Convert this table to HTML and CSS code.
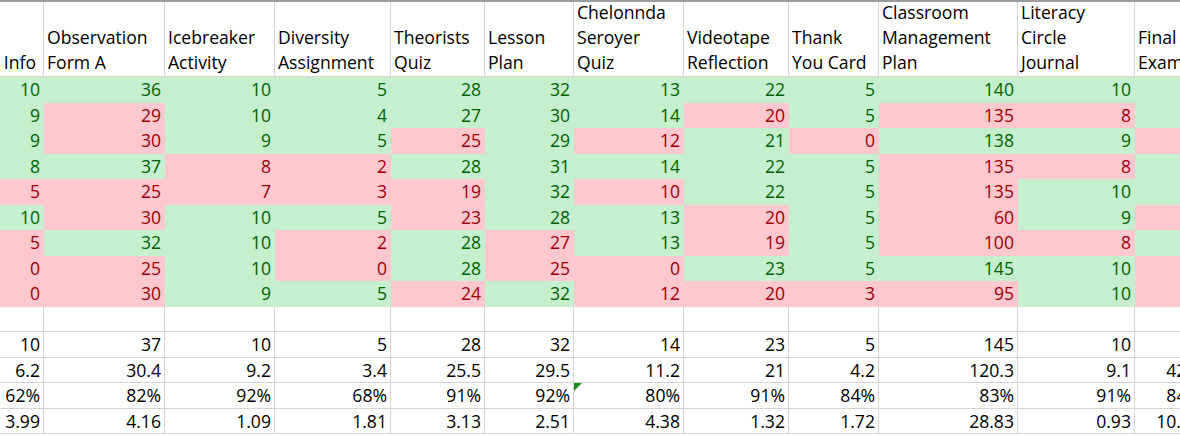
FILE: index.html
```html
<!DOCTYPE html>
<html>
<head>
<meta charset="utf-8">
<link rel="stylesheet" href="styles.css">
</head>
<body>
<div class="sheet">
  <div class="c h">Contact Info</div>
  <div class="c h">Observation<br>Form A</div>
  <div class="c h">Icebreaker<br>Activity</div>
  <div class="c h">Diversity<br>Assignment</div>
  <div class="c h">Theorists<br>Quiz</div>
  <div class="c h">Lesson<br>Plan</div>
  <div class="c h">Chelonnda<br>Seroyer<br>Quiz</div>
  <div class="c h">Videotape<br>Reflection</div>
  <div class="c h">Thank<br>You Card</div>
  <div class="c h">Classroom<br>Management<br>Plan</div>
  <div class="c h">Literacy<br>Circle<br>Journal</div>
  <div class="c h">Final<br>Exam</div>

  <div class="c g">10</div><div class="c g">36</div><div class="c g">10</div><div class="c g">5</div><div class="c g">28</div><div class="c g">32</div><div class="c g">13</div><div class="c g">22</div><div class="c g">5</div><div class="c g">140</div><div class="c g">10</div><div class="c g">48</div>
  <div class="c g">9</div><div class="c r">29</div><div class="c g">10</div><div class="c g">4</div><div class="c g">27</div><div class="c g">30</div><div class="c g">14</div><div class="c r">20</div><div class="c g">5</div><div class="c r">135</div><div class="c r">8</div><div class="c g">47</div>
  <div class="c g">9</div><div class="c r">30</div><div class="c g">9</div><div class="c g">5</div><div class="c r">25</div><div class="c g">29</div><div class="c r">12</div><div class="c g">21</div><div class="c r">0</div><div class="c g">138</div><div class="c g">9</div><div class="c r">38</div>
  <div class="c g">8</div><div class="c g">37</div><div class="c r">8</div><div class="c r">2</div><div class="c g">28</div><div class="c g">31</div><div class="c g">14</div><div class="c g">22</div><div class="c g">5</div><div class="c r">135</div><div class="c r">8</div><div class="c g">48</div>
  <div class="c r">5</div><div class="c r">25</div><div class="c r">7</div><div class="c r">3</div><div class="c r">19</div><div class="c g">32</div><div class="c r">10</div><div class="c g">22</div><div class="c g">5</div><div class="c r">135</div><div class="c g">10</div><div class="c g">46</div>
  <div class="c g">10</div><div class="c r">30</div><div class="c g">10</div><div class="c g">5</div><div class="c r">23</div><div class="c g">28</div><div class="c g">13</div><div class="c r">20</div><div class="c g">5</div><div class="c r">60</div><div class="c g">9</div><div class="c r">40</div>
  <div class="c r">5</div><div class="c g">32</div><div class="c g">10</div><div class="c r">2</div><div class="c g">28</div><div class="c r">27</div><div class="c g">13</div><div class="c r">19</div><div class="c g">5</div><div class="c r">100</div><div class="c r">8</div><div class="c g">46</div>
  <div class="c r">0</div><div class="c r">25</div><div class="c g">10</div><div class="c r">0</div><div class="c g">28</div><div class="c r">25</div><div class="c r">0</div><div class="c g">23</div><div class="c g">5</div><div class="c g">145</div><div class="c g">10</div><div class="c r">36</div>
  <div class="c r">0</div><div class="c r">30</div><div class="c g">9</div><div class="c g">5</div><div class="c r">24</div><div class="c g">32</div><div class="c r">12</div><div class="c r">20</div><div class="c r">3</div><div class="c r">95</div><div class="c g">10</div><div class="c r">31</div>

  <div class="c"></div><div class="c"></div><div class="c"></div><div class="c"></div><div class="c"></div><div class="c"></div><div class="c"></div><div class="c"></div><div class="c"></div><div class="c"></div><div class="c"></div><div class="c"></div>

  <div class="c">10</div><div class="c">37</div><div class="c">10</div><div class="c">5</div><div class="c">28</div><div class="c">32</div><div class="c">14</div><div class="c">23</div><div class="c">5</div><div class="c">145</div><div class="c">10</div><div class="c">48</div>
  <div class="c">6.2</div><div class="c">30.4</div><div class="c">9.2</div><div class="c">3.4</div><div class="c">25.5</div><div class="c">29.5</div><div class="c">11.2</div><div class="c">21</div><div class="c">4.2</div><div class="c">120.3</div><div class="c">9.1</div><div class="c">42.2</div>
  <div class="c">62%</div><div class="c">82%</div><div class="c">92%</div><div class="c">68%</div><div class="c">91%</div><div class="c">92%</div><div class="c tri">80%</div><div class="c">91%</div><div class="c">84%</div><div class="c">83%</div><div class="c">91%</div><div class="c">84%</div>
  <div class="c">3.99</div><div class="c">4.16</div><div class="c">1.09</div><div class="c">1.81</div><div class="c">3.13</div><div class="c">2.51</div><div class="c">4.38</div><div class="c">1.32</div><div class="c">1.72</div><div class="c">28.83</div><div class="c">0.93</div><div class="c">10.44</div>
</div>
</body>
</html>
```

FILE: styles.css
```css
html, body {
  margin: 0;
  padding: 0;
  overflow: hidden;
  background: #ffffff;
}

body {
  font-family: "Open Sans", "Liberation Sans", sans-serif;
  font-size: 17.6px;
  color: #000000;
}

.sheet {
  display: grid;
  grid-template-columns: 111px 121px 110px 116px 94px 89px 110px 105px 90px 139px 117px 70px;
  grid-template-rows: 75px repeat(14, 25.5px);
  width: max-content;
  margin-left: -67px;
  border-top: 2px solid #9c9c9c;
}

.c {
  box-sizing: border-box;
  border-right: 1px solid #d5d5d5;
  border-bottom: 1px solid #d5d5d5;
  padding: 0 3px;
  line-height: 24.5px;
  text-align: right;
  white-space: nowrap;
  overflow: hidden;
}

.h {
  display: flex;
  flex-direction: column;
  justify-content: flex-end;
  text-align: left;
  line-height: 25px;
  padding-bottom: 1px;
  overflow: visible;
}

.g {
  background: #c6efce;
  color: #006100;
  border-color: transparent;
}

.r {
  background: #ffc7ce;
  color: #9c0006;
  border-color: transparent;
}

.tri {
  position: relative;
}

.tri::before {
  content: "";
  position: absolute;
  left: 0;
  top: 0;
  border-top: 8px solid #1f8a1f;
  border-right: 8px solid transparent;
}
```
